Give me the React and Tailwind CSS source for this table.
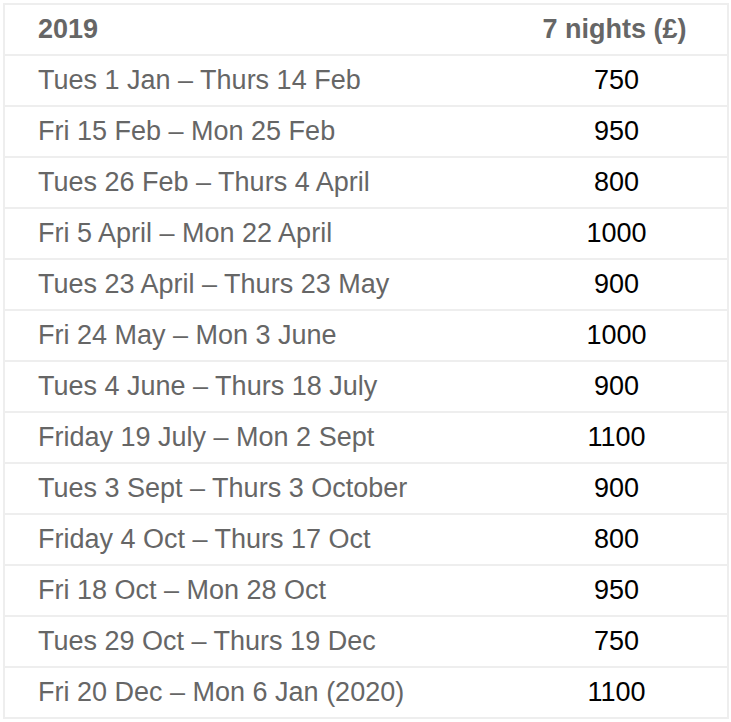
const rows = [
  ["Tues 1 Jan – Thurs 14 Feb", "750"],
  ["Fri 15 Feb – Mon 25 Feb", "950"],
  ["Tues 26 Feb – Thurs 4 April", "800"],
  ["Fri 5 April – Mon 22 April", "1000"],
  ["Tues 23 April – Thurs 23 May", "900"],
  ["Fri 24 May – Mon 3 June", "1000"],
  ["Tues 4 June – Thurs 18 July", "900"],
  ["Friday 19 July – Mon 2 Sept", "1100"],
  ["Tues 3 Sept – Thurs 3 October", "900"],
  ["Friday 4 Oct – Thurs 17 Oct", "800"],
  ["Fri 18 Oct – Mon 28 Oct", "950"],
  ["Tues 29 Oct – Thurs 19 Dec", "750"],
  ["Fri 20 Dec – Mon 6 Jan (2020)", "1100"],
];

export default function App() {
  return (
    <div className="bg-white w-[731px] h-[722px] pt-[3px] pl-[3px] font-['Liberation_Sans',Arial,sans-serif] text-[27px]">
      <table className="border-collapse w-[726px] table-fixed">
        <thead>
          <tr className="h-[51px]">
            <th className="w-[502px] border-y-2 border-l-2 border-[#eeeeee] text-left pl-[33px] font-bold text-[#666666]">2019</th>
            <th className="border-y-2 border-r-2 border-[#eeeeee] text-center font-bold text-[#666666] pr-[4px]">7 nights (£)</th>
          </tr>
        </thead>
        <tbody>
          {rows.map(([d, p]) => (
            <tr key={d} className="h-[51px]">
              <td className="border-y-2 border-l-2 border-[#eeeeee] pl-[33px] text-[#666666]">{d}</td>
              <td className="border-y-2 border-r-2 border-[#eeeeee] text-center text-black">{p}</td>
            </tr>
          ))}
        </tbody>
      </table>
    </div>
  );
}
